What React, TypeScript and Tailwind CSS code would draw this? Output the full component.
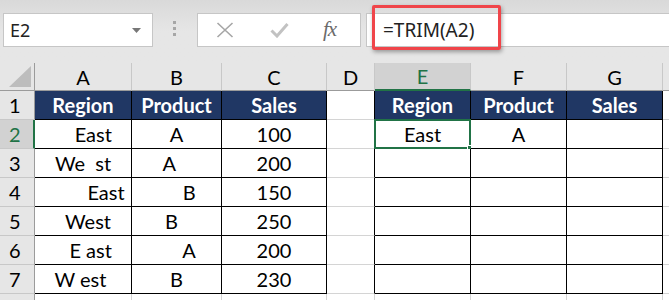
import React from "react";

const COLS = ["A", "B", "C", "D", "E", "F", "G"];
const WIDTHS = ["w-[97px]", "w-[90px]", "w-[105px]", "w-[48px]", "w-[96px]", "w-[96px]", "w-[96px]"];

// raw values with the stray spaces kept, as in the source sheet
const DATA: string[][] = [
  ["    East", "A", "100"],
  ["We  st", "A   ", "200"],
  ["         East", "     B", "150"],
  ["  West", "B  ", "250"],
  ["   E ast", "     A", "200"],
  ["W est ", "B", "230"],
];

const HEAD = ["Region", "Product", "Sales"];

function Cell({
  width,
  kind,
  children,
  selected,
}: {
  width: string;
  kind: "head" | "data" | "grid" | "gridEdge";
  children?: React.ReactNode;
  selected?: boolean;
}) {
  const base = "relative shrink-0 h-full flex items-center justify-center whitespace-pre text-[20px] border-r border-b";
  const skin =
    kind === "head"
      ? "bg-[#203764] text-white font-bold border-black"
      : kind === "data"
      ? "bg-white text-black border-black"
      : kind === "gridEdge"
      ? "bg-white border-r-black border-b-[#d4d4d4]"
      : "bg-white border-[#d4d4d4]";
  return (
    <div className={`${base} ${width} ${skin}`}>
      {children}
      {selected && (
        <>
          <div className="absolute -left-px -top-px -right-px -bottom-px border-2 border-[#217346]" />
          <div className="absolute -right-[4px] -bottom-[4px] w-[7px] h-[7px] bg-[#217346] border border-white" />
        </>
      )}
    </div>
  );
}

function RowHead({ n, active }: { n?: number; active?: boolean }) {
  return (
    <div
      className={`shrink-0 w-[35px] h-full flex items-center pl-[9px] text-[20px] border-b border-b-[#c8c8c8] ${
        active
          ? "bg-[#d2d2d2] text-[#217346] border-r-2 border-r-[#217346]"
          : "bg-[#e6e6e6] text-black border-r border-r-[#9b9b9b]"
      }`}
    >
      {n}
    </div>
  );
}

export default function App() {
  return (
    <div className="w-[669px] h-[300px] overflow-hidden bg-white relative" style={{ fontFamily: "Lato, 'Noto Sans', sans-serif" }}>
      {/* formula bar */}
      <div className="h-[63px] flex items-start pt-[13px] bg-gradient-to-b from-[#d9d9d9] via-[#e6e6e6] to-[#e6e6e6]">
        <div className="ml-[3px] w-[150px] h-[34px] bg-white border border-[#c6c6c6] flex items-center justify-between pl-[6px] pr-[11px]" style={{ fontFamily: "'Noto Sans', sans-serif" }}>
          <span className="text-[18px] text-[#222]">E2</span>
          <svg width="9" height="5" viewBox="0 0 9 5">
            <path d="M0 0h9L4.5 5z" fill="#777" />
          </svg>
        </div>
        <div className="ml-[20px] mt-[8px] flex flex-col gap-[3px]">
          <div className="w-[3px] h-[3px] bg-[#a6a6a6]" />
          <div className="w-[3px] h-[3px] bg-[#a6a6a6]" />
          <div className="w-[3px] h-[3px] bg-[#a6a6a6]" />
        </div>
        <div className="ml-[21px] w-[164px] h-[34px] bg-white border border-[#c6c6c6] flex items-center">
          <svg className="ml-[18px]" width="18" height="16" viewBox="0 0 18 16">
            <path d="M1.5 1L16.5 15M16.5 1L1.5 15" stroke="#a6a6a6" strokeWidth="1.6" />
          </svg>
          <svg className="ml-[36px]" width="19" height="16" viewBox="0 0 19 16">
            <path d="M1.5 8.5L7 14L17.5 2" stroke="#c2c2c2" strokeWidth="3" fill="none" />
          </svg>
          <span
            className="ml-[34px] text-[21px] italic text-[#6b6b6b] tracking-[-1px]"
            style={{ fontFamily: "'Liberation Serif', 'DejaVu Serif', serif" }}
          >
            fx
          </span>
        </div>
        <div className="ml-[5px] flex-1 h-[34px] bg-white border border-[#c6c6c6] border-r-0 flex items-center pl-[16px]" style={{ fontFamily: "'Noto Sans', sans-serif" }}>
          <span className="text-[19px] text-[#222]">=TRIM(A2)</span>
        </div>
        {/* annotation */}
        <div className="absolute left-[372px] top-[5px] w-[129px] h-[45px] border-[3px] border-[#f0454a] rounded-[2px] shadow-[1px_2px_4px_rgba(0,0,0,0.35)]" />
      </div>

      {/* column headers */}
      <div className="flex h-[28px]">
        <div className="shrink-0 w-[35px] h-full bg-[#e6e6e6] border-r border-b border-[#9b9b9b] relative">
          <svg className="absolute right-[3px] bottom-[3px]" width="22" height="21" viewBox="0 0 22 21">
            <path d="M22 0V21H0z" fill="#bdbdbd" />
          </svg>
        </div>
        {COLS.map((c, i) => (
          <div
            key={c}
            className={`shrink-0 ${WIDTHS[i]} h-full flex items-center justify-center text-[20px] border-r border-r-[#c8c8c8] ${
              c === "E"
                ? "bg-[#d2d2d2] text-[#217346] border-b-2 border-b-[#217346]"
                : "bg-[#e6e6e6] text-black border-b border-b-[#9b9b9b]"
            }`}
          >
            {c}
          </div>
        ))}
        <div className="flex-1 h-full bg-[#e6e6e6] border-b border-[#9b9b9b]" />
      </div>

      {/* row 1 */}
      <div className="flex h-[29px]">
        <RowHead n={1} />
        {HEAD.map((h, i) => (
          <Cell key={"l" + h} width={WIDTHS[i]} kind="head">
            {h}
          </Cell>
        ))}
        <Cell width={WIDTHS[3]} kind="gridEdge" />
        {HEAD.map((h, i) => (
          <Cell key={"r" + h} width={WIDTHS[4 + i]} kind="head">
            {h}
          </Cell>
        ))}
        <div className="flex-1 h-full border-b border-[#d4d4d4]" />
      </div>

      {DATA.map((row, r) => (
        <div key={r} className="flex h-[29px]">
          <RowHead n={r + 2} active={r === 0} />
          {row.map((v, i) => (
            <Cell key={i} width={WIDTHS[i]} kind="data">
              {v}
            </Cell>
          ))}
          <Cell width={WIDTHS[3]} kind="gridEdge" />
          <Cell width={WIDTHS[4]} kind="data" selected={r === 0}>
            {r === 0 ? "East" : ""}
          </Cell>
          <Cell width={WIDTHS[5]} kind="data">
            {r === 0 ? "A" : ""}
          </Cell>
          <Cell width={WIDTHS[6]} kind="data" />
          <div className="flex-1 h-full border-b border-[#d4d4d4]" />
        </div>
      ))}

      {/* row 8, cut off at the bottom edge */}
      <div className="flex h-[29px]">
        <RowHead />
        {COLS.map((c, i) => (
          <Cell key={c} width={WIDTHS[i]} kind="grid" />
        ))}
      </div>
    </div>
  );
}
